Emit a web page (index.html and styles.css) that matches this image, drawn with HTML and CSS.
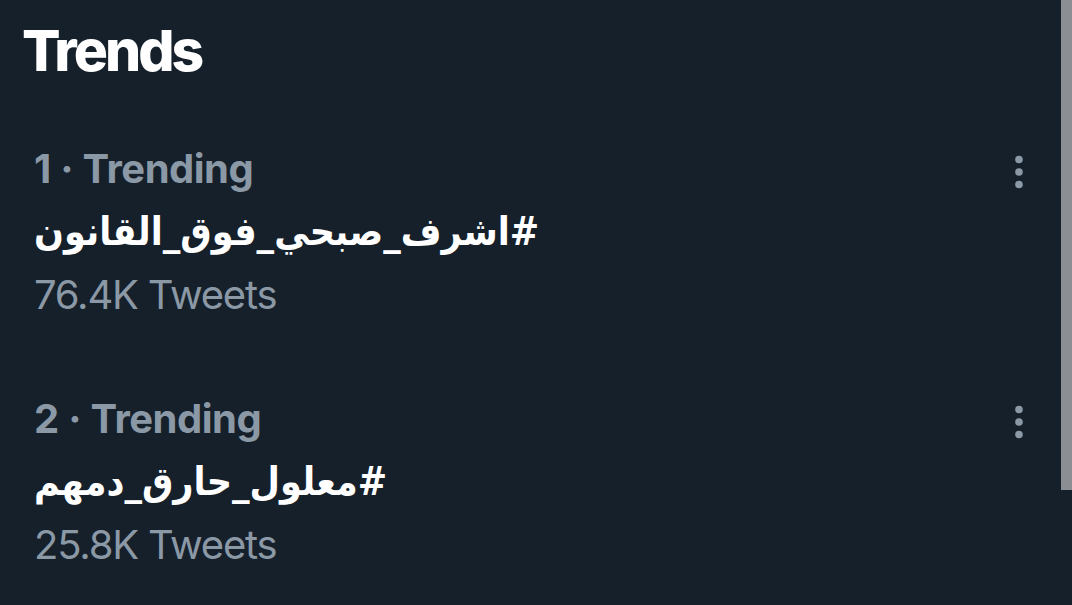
FILE: index.html
```html
<!DOCTYPE html>
<html lang="en">
<head>
<meta charset="utf-8">
<title>Trends</title>
<link rel="stylesheet" href="styles.css">
</head>
<body>
<div class="page">
  <main class="panel">
    <h1 class="title">Trends</h1>
    <section class="trend">
      <div class="trend-body">
        <div class="meta">1 · Trending</div>
        <div class="tag"><bdi dir="rtl">#اشرف_صبحي_فوق_القانون</bdi></div>
        <div class="count">76.4K Tweets</div>
      </div>
      <button class="more" aria-label="More">
        <svg viewBox="0 0 10 34" width="10" height="34"><circle cx="5" cy="4.5" r="3.8"/><circle cx="5" cy="17" r="3.8"/><circle cx="5" cy="29.5" r="3.8"/></svg>
      </button>
    </section>
    <section class="trend">
      <div class="trend-body">
        <div class="meta">2 · Trending</div>
        <div class="tag"><bdi dir="rtl">#معلول_حارق_دمهم</bdi></div>
        <div class="count">25.8K Tweets</div>
      </div>
      <button class="more" aria-label="More">
        <svg viewBox="0 0 10 34" width="10" height="34"><circle cx="5" cy="4.5" r="3.8"/><circle cx="5" cy="17" r="3.8"/><circle cx="5" cy="29.5" r="3.8"/></svg>
      </button>
    </section>
  </main>
  <div class="scrollbar"><div class="thumb"></div></div>
</div>
</body>
</html>
```
FILE: styles.css
```css
html, body {
  margin: 0;
  padding: 0;
  background: #15202b;
}
body {
  font-family: "Inter", "DejaVu Sans", sans-serif;
  color: #ffffff;
  width: 1072px;
  height: 605px;
  overflow: hidden;
}
.page {
  display: flex;
  height: 605px;
}
.panel {
  flex: 1;
  display: flex;
  flex-direction: column;
}
.title {
  margin: 16px 0 0 0;
  padding-left: 22px;
  font-size: 57px;
  line-height: 70px;
  font-weight: 800;
  letter-spacing: -3px;
  color: #ffffff;
}
.trend {
  display: flex;
  align-items: flex-start;
  padding: 55px 0 0 34px;
}
.trend + .trend {
  padding-top: 68px;
}
.trend-body {
  flex: 1;
  display: flex;
  flex-direction: column;
}
.meta {
  font-size: 40px;
  line-height: 56px;
  font-weight: 700;
  color: #8b98a5;
  letter-spacing: -0.5px;
  word-spacing: 0.5px;
}
.tag {
  font-family: "DejaVu Sans Condensed", "DejaVu Sans", sans-serif;
  font-size: 39px;
  line-height: 72px;
  margin-top: -1px;
  margin-bottom: -1px;
  font-weight: 700;
  color: #ffffff;
}
.count {
  font-size: 40px;
  line-height: 56px;
  font-weight: 400;
  color: #8b98a5;
  letter-spacing: -1.2px;
}
.more {
  background: none;
  border: 0;
  padding: 0;
  margin: 14px 37px 0 0;
  fill: #8b98a5;
  display: flex;
}
.scrollbar {
  width: 11px;
  flex: none;
}
.thumb {
  height: 490px;
  background: #8b8f93;
}
```
